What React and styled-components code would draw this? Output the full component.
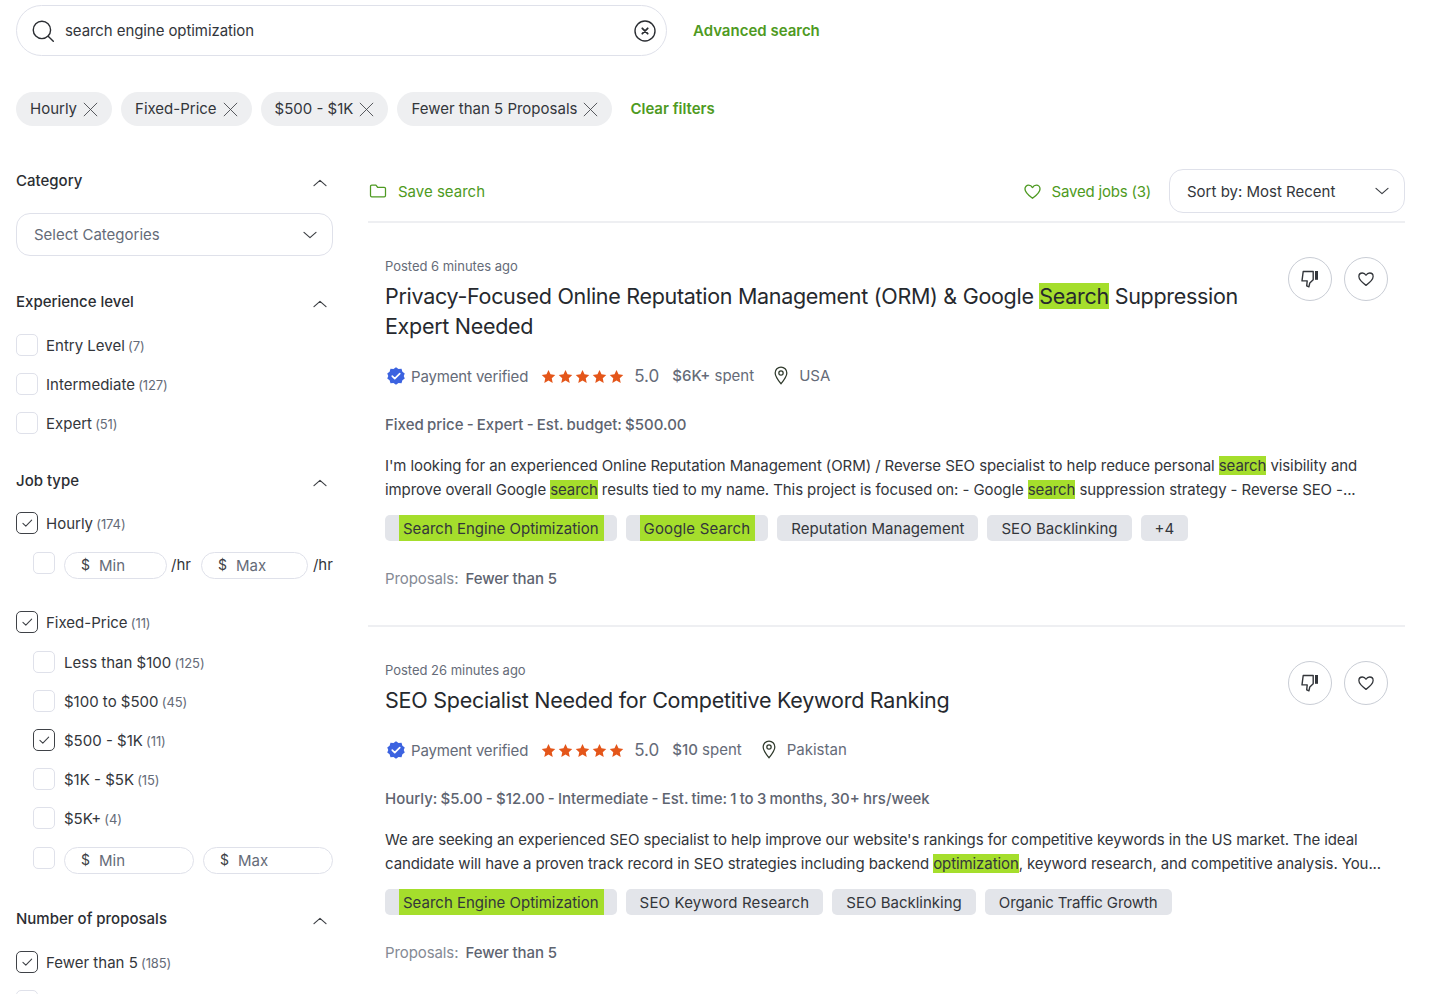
import React from "react";
import styled, { createGlobalStyle } from "styled-components";

const Global = createGlobalStyle`
  html, body { margin: 0; padding: 0; background: #fff; }
  body { font-family: Inter, "Liberation Sans", sans-serif; color: #2b2e33; -webkit-font-smoothing: antialiased; }
  * { box-sizing: border-box; }
`;

const Page = styled.div`
  width: 1440px; height: 994px; overflow: hidden; padding: 5px 35px 0 16px;
`;
const SearchRow = styled.div`display: flex; align-items: center; gap: 26px; height: 51px;`;
const SearchBox = styled.div`
  width: 651px; height: 51px; border: 1px solid #dfe1ea; border-radius: 26px;
  display: flex; align-items: center; padding: 0 9px 0 13px; gap: 9px;
`;
const SearchText = styled.span`flex: 1; font-size: 15px; letter-spacing: -0.08px; color: #33363b;`;
const GreenLink = styled.a`font-size: 15px; font-weight: 600; color: #4e9a22;`;
const ChipRow = styled.div`display: flex; align-items: center; gap: 9px; margin-top: 36px; height: 34px;`;
const Chip = styled.div`
  height: 34px; border-radius: 17px; background: #eeeff1; padding: 0 13px 2px 14px;
  display: flex; align-items: center; gap: 5px; font-size: 15px; color: #33363b;
  svg { margin-top: 2px; }
`;
const ClearLink = styled(GreenLink)`margin: -2px 0 0 9px; letter-spacing: -0.02px;`;
const Columns = styled.div`display: flex; gap: 35px; margin-top: 43px;`;
const Sidebar = styled.aside`width: 317px; flex: none;`;
const Main = styled.main`flex: 1; min-width: 0;`;

const SectionHead = styled.div`
  display: flex; justify-content: space-between; align-items: center; height: 24px;
  margin-top: ${p => p.$mt || 0}px; font-size: 15px; font-weight: 500; color: #2b2e33; padding-right: 4px;
  span { padding-bottom: 2px; }
  svg { margin-top: 4px; }
`;
const SelectBox = styled.div`
  margin-top: 20px; height: 43px; border: 1px solid #dfe1ea; border-radius: 14px;
  display: flex; align-items: center; justify-content: space-between; padding: 0 13px 0 17px;
  font-size: 15px; color: #656b78;
`;
const Check = styled.label`
  display: flex; align-items: center; gap: ${p => (p.$nested ? 9 : 8)}px; height: 22px; margin-top: ${p => p.$mt ?? 17}px;
  margin-left: ${p => (p.$nested ? 17 : 0)}px; font-size: 15px; color: #33363b;
`;
const Box = styled.span`
  width: 22px; height: 22px; flex: none; border-radius: 5px; display: flex; align-items: center; justify-content: center;
  border: 1px solid ${p => (p.$on ? "#3f4247" : "#dfe1ea")};
`;
const Count = styled.span`font-size: 13px; color: #656b78; margin-left: -1px; letter-spacing: -0.1px;`;
const RangeRow = styled.div`
  display: flex; align-items: center; margin-left: 17px; margin-top: ${p => p.$mt}px; height: 28px; font-size: 15px; color: #33363b;
`;
const SmallBox = styled(Box)`margin-right: 9px; margin-top: -5px;`;
const Pill = styled.div`
  width: ${p => p.$w}px; height: 27px; flex: none; border: 1px solid #dfe1ea; border-radius: 14px;
  display: flex; align-items: center; padding-left: 16px; gap: 9px; color: #656b78; font-size: 15px; margin-left: ${p => p.$ml || 0}px;
`;
const Dollar = styled.span`font-size: 14px; color: #3c3f44; margin-top: -1px;`;
const Unit = styled.span`font-size: 15px; margin: -2px 0 0 ${p => p.$ml || 4}px;`;

const Toolbar = styled.div`
  display: flex; align-items: center; height: 53px; padding-bottom: 9px; margin-top: 1px; border-bottom: 2px solid #eeeff2;
`;
const SaveLink = styled.a`display: flex; align-items: center; gap: 10px; font-size: 15px; color: #4e9a22; letter-spacing: ${p => p.$ls || 0}px;`;
const Spacer = styled.div`flex: 1;`;
const Sort = styled.div`
  margin-left: 18px; width: 236px; height: 44px; border: 1px solid #dfe1ea; border-radius: 14px;
  display: flex; align-items: center; justify-content: space-between; padding: 0 13px 0 17px; font-size: 15px; color: #33363b;
`;
const Job = styled.article`
  position: relative; padding: 34px 17px 34px; border-bottom: ${p => (p.$last ? 0 : "2px solid #eeeff2")};
`;
const Posted = styled.div`font-size: 13px; line-height: 18px; color: #656b78; letter-spacing: -0.02px;`;
const Title = styled.h2`
  margin: 6px 0 0; font-size: 21.5px; letter-spacing: ${p => p.$ls}px; line-height: 30px; font-weight: 400; color: #26292e; width: 870px;
`;
const Actions = styled.div`position: absolute; right: 17px; top: 34px; display: flex; gap: 12px;`;
const RoundBtn = styled.div`
  width: 44px; height: 44px; border-radius: 50%; border: 1px solid #c9cdd5; display: flex; align-items: center; justify-content: center;
`;
const Mark = styled.mark`background: #a5de2c; color: inherit;`;
const MetaRow = styled.div`display: flex; align-items: center; height: 24px; margin-top: 23px; font-size: 15px; color: #656b78;`;
const Verified = styled.span`display: flex; align-items: center; gap: 5px; letter-spacing: -0.15px; svg { margin-left: 1px; }`;
const Stars = styled.span`display: flex; gap: 2px; margin-left: 13px;`;
const Score = styled.span`font-size: 17px; margin-left: 10px;`;
const Spent = styled.span`margin-left: 13px; margin-top: -2px; b { font-weight: 500; }`;
const Location = styled.span`display: flex; align-items: center; gap: 8px; margin-left: 17px; margin-top: -2px;`;
const Budget = styled.div`margin-top: 25px; font-size: 15px; line-height: 24px; font-weight: 500; color: #5e6470; word-spacing: -0.8px;`;
const Desc = styled.p`margin: 17px 0 0; font-size: 15px; line-height: 24px; color: #33363b; letter-spacing: -0.09px;`;
const Tags = styled.div`display: flex; gap: 9px; margin-top: 13px;`;
const Tag = styled.span`
  height: 26px; background: #e3e5ea; border-radius: 5px; padding: 0 14px; display: flex; align-items: center;
  font-size: 15px; color: #33363b; letter-spacing: ${p => p.$ls || 0}px;
`;
const TagMark = styled.span`background: #a5de2c; height: 26px; display: flex; align-items: center; padding: 0 5px 0 4px; margin-right: -1px;`;
const Proposals = styled.div`margin-top: 26px; font-size: 15px; line-height: 24px; color: #858a94; letter-spacing: -0.1px; b { font-weight: 500; color: #5e6470; margin-left: 3px; }`;

const Svg = ({ s = 16, c = "#3c3f44", w = 1.5, children, vb = 24, fill = "none" }) => (
  <svg width={s} height={s} viewBox={`0 0 ${vb} ${vb}`} fill={fill} stroke={c} strokeWidth={w} strokeLinecap="round" strokeLinejoin="round">{children}</svg>
);
const Up = () => <Svg s={18} w={1.6}><path d="M4 15.5 12 8.5l8 7" /></Svg>;
const Down = () => <Svg s={18} w={1.6}><path d="M4 8.5 12 15.5l8-7" /></Svg>;
const X = () => <Svg s={17} w={1.2}><path d="M3 3l18 18M21 3 3 21" /></Svg>;
const Tick = () => <Svg s={14} w={1.8}><path d="M5 12.5l5 5L20 7" /></Svg>;
const Heart = ({ c = "#33363b", s = 18 }) => (
  <Svg s={s} c={c} w={1.7}><path d="M12 20.5C6 16 2.5 12.6 2.5 8.7 2.5 6 4.6 4 7.1 4c2 0 3.8 1.1 4.9 3 1.1-1.9 2.9-3 4.9-3 2.5 0 4.6 2 4.6 4.7 0 3.9-3.5 7.3-9.5 11.8z" /></Svg>
);
const Thumb = () => (
  <svg width="20" height="20" viewBox="0 0 20 20" fill="none" stroke="#33363b" strokeWidth="1.4" strokeLinejoin="round">
    <path d="M3.2 2.5h10v8.2l-3.4 3.2-.9 4-2.2-1 .5-5H2l1.2-9.4z" />
    <rect x="15" y="2" width="3" height="8.8" fill="#33363b" stroke="none" />
  </svg>
);
const Pin = () => (
  <Svg s={20} c="#2f3a2c" w={1.5}>
    <path d="M12 22.5C8 17.5 5 13.8 5 9.5a7 7 0 0 1 14 0c0 4.3-3 8-7 13z" /><circle cx="12" cy="9.5" r="2.6" />
  </Svg>
);
const Star = () => (
  <svg width="15" height="15" viewBox="0 0 24 24" fill="#e4561a"><path d="M12 1.5l3.2 7 7.6.9-5.6 5.2 1.5 7.6L12 18.4l-6.7 3.8 1.5-7.6L1.2 9.4l7.6-.9z" /></svg>
);
const Badge = () => (
  <svg width="20" height="20" viewBox="0 0 24 24">
    <path fill="#3c63e0" d="M12 1.5l3 2 3.6-.1 1.1 3.4 2.8 2.2L21.3 12l1.2 3-2.8 2.2-1.1 3.4-3.6-.1-3 2-3-2-3.6.1-1.1-3.4L1.5 15l1.2-3-1.2-3 2.8-2.2 1.1-3.4 3.6.1z" />
    <path d="M7.5 12.2l3 3 6-6" fill="none" stroke="#fff" strokeWidth="2" strokeLinecap="round" strokeLinejoin="round" />
  </svg>
);

const Opt = ({ on, nested, mt, label, count }) => (
  <Check $nested={nested} $mt={mt}>
    <Box $on={on}>{on && <Tick />}</Box>
    {label && <span>{label} <Count>({count})</Count></span>}
  </Check>
);

const JobCard = ({ posted, title, titleLs, spent, place, budget, desc, tags, last }) => (
  <Job $last={last}>
    <Posted>{posted}</Posted>
    <Title $ls={titleLs}>{title}</Title>
    <Actions>
      <RoundBtn><Thumb /></RoundBtn>
      <RoundBtn><Heart /></RoundBtn>
    </Actions>
    <MetaRow>
      <Verified><Badge />Payment verified</Verified>
      <Stars><Star /><Star /><Star /><Star /><Star /></Stars>
      <Score>5.0</Score>
      <Spent><b>{spent}</b> spent</Spent>
      <Location><Pin />{place}</Location>
    </MetaRow>
    <Budget>{budget}</Budget>
    <Desc>{desc}</Desc>
    <Tags>
      {tags.map(t => (
        <Tag key={t.label} $ls={t.ls}>{t.hit ? <TagMark>{t.label}</TagMark> : t.label}</Tag>
      ))}
    </Tags>
    <Proposals>Proposals: <b>Fewer than 5</b></Proposals>
  </Job>
);

export default function App() {
  return (
    <Page>
      <Global />
      <SearchRow>
        <SearchBox>
          <Svg s={26} c="#2b2e33" w={1.3}><circle cx="11" cy="11" r="8" /><path d="M17 17l4.5 4.5" /></Svg>
          <SearchText>search engine optimization</SearchText>
          <Svg s={24} c="#2b2e33" w={1.4}><circle cx="12" cy="12" r="10" /><path d="M9.3 9.3l5.4 5.4M14.7 9.3l-5.4 5.4" strokeWidth="1.8" /></Svg>
        </SearchBox>
        <GreenLink>Advanced search</GreenLink>
      </SearchRow>
      <ChipRow>
        <Chip>Hourly <X /></Chip>
        <Chip>Fixed-Price <X /></Chip>
        <Chip>$500 - $1K <X /></Chip>
        <Chip>Fewer than 5 Proposals <X /></Chip>
        <ClearLink>Clear filters</ClearLink>
      </ChipRow>
      <Columns>
        <Sidebar>
          <SectionHead><span>Category</span><Up /></SectionHead>
          <SelectBox>Select Categories<Down /></SelectBox>
          <SectionHead $mt={34}><span>Experience level</span><Up /></SectionHead>
          <Opt mt={20} label="Entry Level" count="7" />
          <Opt label="Intermediate" count="127" />
          <Opt label="Expert" count="51" />
          <SectionHead $mt={35}><span>Job type</span><Up /></SectionHead>
          <Opt on mt={19} label="Hourly" count="174" />
          <RangeRow $mt={17}>
            <SmallBox />
            <Pill $w={103}><Dollar>$</Dollar>Min</Pill>
            <Unit>/hr</Unit>
            <Pill $w={107} $ml={10}><Dollar>$</Dollar>Max</Pill>
            <Unit $ml={5}>/hr</Unit>
          </RangeRow>
          <Opt on mt={32} label="Fixed-Price" count="11" />
          <Opt nested mt={18} label="Less than $100" count="125" />
          <Opt nested label="$100 to $500" count="45" />
          <Opt nested on label="$500 - $1K" count="11" />
          <Opt nested label="$1K - $5K" count="15" />
          <Opt nested label="$5K+" count="4" />
          <RangeRow $mt={17}>
            <SmallBox />
            <Pill $w={130}><Dollar>$</Dollar>Min</Pill>
            <Pill $w={130} $ml={9}><Dollar>$</Dollar>Max</Pill>
          </RangeRow>
          <SectionHead $mt={33}><span>Number of proposals</span><Up /></SectionHead>
          <Opt on mt={20} label="Fewer than 5" count="185" />
          <Opt />
        </Sidebar>
        <Main>
          <Toolbar>
            <SaveLink>
              <Svg s={20} c="#4e9a22" w={1.5}><path d="M3 6.5A1.5 1.5 0 0 1 4.5 5h5l2 2.5h8A1.5 1.5 0 0 1 21 9v8.5a1.5 1.5 0 0 1-1.5 1.5h-15A1.5 1.5 0 0 1 3 17.5z" /></Svg>
              Save search
            </SaveLink>
            <Spacer />
            <SaveLink $ls={-0.2}><Heart c="#4e9a22" s={19} />Saved jobs (3)</SaveLink>
            <Sort>Sort by: Most Recent<Down /></Sort>
          </Toolbar>
          <JobCard
            posted="Posted 6 minutes ago"
            titleLs={-0.3}
            title={<>Privacy-Focused Online Reputation Management (ORM) &amp; Google <Mark>Search</Mark> Suppression Expert Needed</>}
            spent="$6K+" place="USA"
            budget="Fixed price - Expert - Est. budget: $500.00"
            desc={<>I'm looking for an experienced Online Reputation Management (ORM) / Reverse SEO specialist to help reduce personal <Mark>search</Mark> visibility and improve overall Google <Mark>search</Mark> results tied to my name. This project is focused on: - Google <Mark>search</Mark> suppression strategy - Reverse SEO -...</>}
            tags={[
              { label: "Search Engine Optimization", hit: true },
              { label: "Google Search", hit: true, ls: 0.15 },
              { label: "Reputation Management" },
              { label: "SEO Backlinking", ls: 0.05 },
              { label: "+4" },
            ]}
          />
          <JobCard
            last
            posted="Posted 26 minutes ago"
            titleLs={-0.25}
            title="SEO Specialist Needed for Competitive Keyword Ranking"
            spent="$10" place="Pakistan"
            budget="Hourly: $5.00 - $12.00 - Intermediate - Est. time: 1 to 3 months, 30+ hrs/week"
            desc={<>We are seeking an experienced SEO specialist to help improve our website's rankings for competitive keywords in the US market. The ideal candidate will have a proven track record in SEO strategies including backend <Mark>optimization</Mark>, keyword research, and competitive analysis. You...</>}
            tags={[
              { label: "Search Engine Optimization", hit: true },
              { label: "SEO Keyword Research", ls: 0.15 },
              { label: "SEO Backlinking" },
              { label: "Organic Traffic Growth", ls: -0.1 },
            ]}
          />
        </Main>
      </Columns>
    </Page>
  );
}
